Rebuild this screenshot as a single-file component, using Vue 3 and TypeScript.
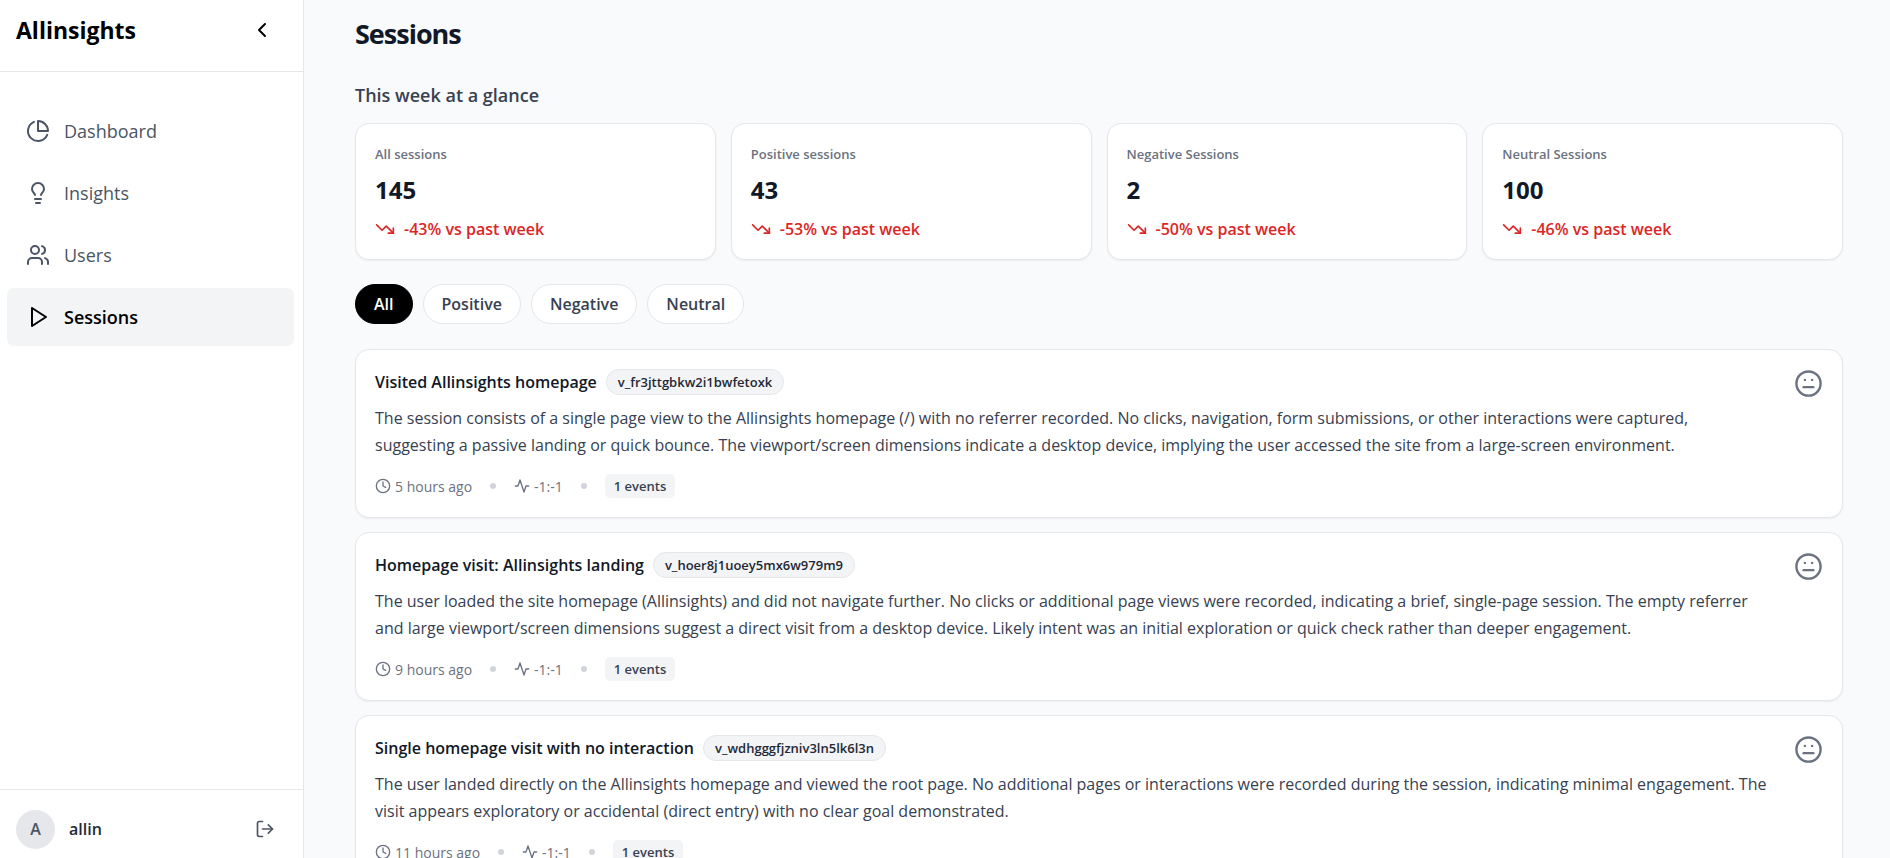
<script setup lang="ts">
import { ref } from 'vue'

interface NavItem { label: string; icon: string[] }
interface Stat { label: string; value: string; change: string }
interface Session { title: string; visitor: string; summary: string; time: string; duration: string; events: string }

const navItems: NavItem[] = [
  { label: 'Dashboard', icon: ['M21.21 15.89A10 10 0 1 1 8 2.83', 'M22 12A10 10 0 0 0 12 2v10z'] },
  {
    label: 'Insights',
    icon: ['M15 14c.2-1 .7-1.7 1.5-2.5 1-.9 1.5-2.2 1.5-3.5A6 6 0 0 0 6 8c0 1 .2 2.2 1.5 3.5.7.7 1.3 1.5 1.5 2.5', 'M9 18h6', 'M10 22h4'],
  },
  {
    label: 'Users',
    icon: ['M16 21v-2a4 4 0 0 0-4-4H6a4 4 0 0 0-4 4v2', 'M13 7a4 4 0 1 1-8 0a4 4 0 1 1 8 0', 'M22 21v-2a4 4 0 0 0-3-3.87', 'M16 3.13a4 4 0 0 1 0 7.75'],
  },
  { label: 'Sessions', icon: ['M6 3l14 9-14 9V3z'] },
]

const stats: Stat[] = [
  { label: 'All sessions', value: '145', change: '-43% vs past week' },
  { label: 'Positive sessions', value: '43', change: '-53% vs past week' },
  { label: 'Negative Sessions', value: '2', change: '-50% vs past week' },
  { label: 'Neutral Sessions', value: '100', change: '-46% vs past week' },
]

const filters: string[] = ['All', 'Positive', 'Negative', 'Neutral']

const sessions: Session[] = [
  {
    title: 'Visited Allinsights homepage',
    visitor: 'v_fr3jttgbkw2i1bwfetoxk',
    summary:
      'The session consists of a single page view to the Allinsights homepage (/) with no referrer recorded. No clicks, navigation, form submissions, or other interactions were captured, suggesting a passive landing or quick bounce. The viewport/screen dimensions indicate a desktop device, implying the user accessed the site from a large-screen environment.',
    time: '5 hours ago',
    duration: '-1:-1',
    events: '1 events',
  },
  {
    title: 'Homepage visit: Allinsights landing',
    visitor: 'v_hoer8j1uoey5mx6w979m9',
    summary:
      'The user loaded the site homepage (Allinsights) and did not navigate further. No clicks or additional page views were recorded, indicating a brief, single-page session. The empty referrer and large viewport/screen dimensions suggest a direct visit from a desktop device. Likely intent was an initial exploration or quick check rather than deeper engagement.',
    time: '9 hours ago',
    duration: '-1:-1',
    events: '1 events',
  },
  {
    title: 'Single homepage visit with no interaction',
    visitor: 'v_wdhgggfjzniv3ln5lk6l3n',
    summary:
      'The user landed directly on the Allinsights homepage and viewed the root page. No additional pages or interactions were recorded during the session, indicating minimal engagement. The visit appears exploratory or accidental (direct entry) with no clear goal demonstrated.',
    time: '11 hours ago',
    duration: '-1:-1',
    events: '1 events',
  },
]

const activeNav = ref('Sessions')
const activeFilter = ref('All')
</script>

<template>
  <div class="app">
    <aside class="sidebar">
      <header class="brand">
        <span class="brand-name">Allinsights</span>
        <button class="icon-button" type="button" aria-label="Collapse sidebar">
          <svg class="icon icon-lg" viewBox="0 0 24 24"><path d="M15 18l-6-6 6-6" /></svg>
        </button>
      </header>

      <nav class="nav">
        <a
          v-for="item in navItems"
          :key="item.label"
          href="#"
          class="nav-link"
          :class="{ active: item.label === activeNav }"
          @click.prevent="activeNav = item.label"
        >
          <svg class="icon icon-lg" viewBox="0 0 24 24"><path v-for="d in item.icon" :key="d" :d="d" /></svg>
          {{ item.label }}
        </a>
      </nav>

      <footer class="account">
        <span class="avatar">A</span>
        <span class="account-name">allin</span>
        <button class="icon-button logout" type="button" aria-label="Log out">
          <svg class="icon icon-md" viewBox="0 0 24 24">
            <path d="M9 21H5a2 2 0 0 1-2-2V5a2 2 0 0 1 2-2h4" />
            <path d="M16 17l5-5-5-5" />
            <path d="M21 12H9" />
          </svg>
        </button>
      </footer>
    </aside>

    <main class="main">
      <h1>Sessions</h1>
      <h2>This week at a glance</h2>

      <section class="stats">
        <article v-for="stat in stats" :key="stat.label" class="card stat">
          <div class="stat-label">{{ stat.label }}</div>
          <div class="stat-value">{{ stat.value }}</div>
          <div class="stat-change">
            <svg class="icon icon-md" viewBox="0 0 24 24">
              <path d="M22 17l-8.500-8.500-5 5L2 7" />
              <path d="M16 17h6v-6" />
            </svg>
            {{ stat.change }}
          </div>
        </article>
      </section>

      <div class="filters">
        <button
          v-for="filter in filters"
          :key="filter"
          type="button"
          class="pill"
          :class="{ active: filter === activeFilter }"
          :aria-pressed="filter === activeFilter"
          @click="activeFilter = filter"
        >
          {{ filter }}
        </button>
      </div>

      <section class="sessions">
        <article v-for="session in sessions" :key="session.visitor" class="card session">
          <div class="session-body">
            <div class="session-head">
              <h3>{{ session.title }}</h3>
              <span class="visitor">{{ session.visitor }}</span>
            </div>
            <p>{{ session.summary }}</p>
            <div class="meta">
              <span class="meta-item">
                <svg class="icon icon-sm" viewBox="0 0 24 24"><circle cx="12" cy="12" r="10" /><path d="M12 6v6l4 2" /></svg>
                {{ session.time }}
              </span>
              <span class="dot"></span>
              <span class="meta-item">
                <svg class="icon icon-sm" viewBox="0 0 24 24"><path d="M22 12h-4l-3 9L9 3l-3 9H2" /></svg>
                {{ session.duration }}
              </span>
              <span class="dot"></span>
              <span class="events">{{ session.events }}</span>
            </div>
          </div>
          <svg class="icon mood" viewBox="0 0 24 24" role="img" aria-label="Neutral">
            <circle cx="12" cy="12" r="10" />
            <path d="M8 15h8" />
            <path d="M9 9h.01" />
            <path d="M15 9h.01" />
          </svg>
        </article>
      </section>
    </main>
  </div>
</template>

<style>
body {
  margin: 0;
}
</style>

<style scoped>
.app {
  display: flex;
  height: 100vh;
  overflow: hidden;
  background: #f9fafb;
  color: #111827;
  font-family: "Segoe UI", "Open Sans", "Noto Sans", sans-serif;
  font-size: 16px;
}

.app *,
.app {
  box-sizing: border-box;
}

.icon {
  flex: none;
  display: block;
  fill: none;
  stroke: currentColor;
  stroke-width: 2;
  stroke-linecap: round;
  stroke-linejoin: round;
}

.icon-lg {
  width: 24px;
  height: 24px;
}

.icon-md {
  width: 20px;
  height: 20px;
}

.icon-sm {
  width: 16px;
  height: 16px;
}

.icon-button {
  display: flex;
  padding: 0;
  border: 0;
  background: none;
  color: inherit;
  cursor: pointer;
}

.sidebar {
  flex: none;
  display: flex;
  flex-direction: column;
  width: 304px;
  border-right: 1px solid #e5e7eb;
  background: #fff;
}

.brand {
  display: flex;
  align-items: center;
  justify-content: space-between;
  height: 72px;
  padding: 0 29px 12px 16px;
  border-bottom: 1px solid #e5e7eb;
  color: #000;
}

.brand-name {
  font-size: 23px;
  font-weight: 700;
}

.nav {
  flex: 1;
  display: flex;
  flex-direction: column;
  gap: 4px;
  padding: 30px 9px 0 7px;
}

.nav-link {
  display: flex;
  align-items: center;
  gap: 14px;
  height: 58px;
  padding: 0 19px;
  border-radius: 7px;
  color: #4b5563;
  font-size: 18px;
  text-decoration: none;
}

.nav-link.active {
  background: #f3f4f6;
  color: #000;
  font-weight: 600;
}

.account {
  display: flex;
  align-items: center;
  height: 69px;
  padding: 10px 28px 0 16px;
  border-top: 1px solid #e5e7eb;
}

.avatar {
  display: flex;
  align-items: center;
  justify-content: center;
  width: 39px;
  height: 39px;
  margin-right: 14px;
  border-radius: 50%;
  background: #e5e7eb;
  color: #4b5563;
  font-weight: 600;
}

.account-name {
  font-weight: 600;
  color: #1f2937;
}

.logout {
  margin-left: auto;
  color: #4b5563;
}

.main {
  flex: 1;
  min-width: 0;
  padding: 14px 47px 0 51px;
}

h1,
h2,
h3,
p {
  margin: 0;
}

h1 {
  font-size: 27px;
  font-weight: 700;
  line-height: 40px;
  letter-spacing: -1px;
}

h2 {
  margin-top: 26px;
  color: #374151;
  font-size: 18px;
  font-weight: 600;
  line-height: 30px;
}

.card {
  border: 1px solid #e5e7eb;
  border-radius: 14px;
  background: #fff;
  box-shadow: 0 1px 2px rgba(0, 0, 0, 0.06);
}

.stats {
  display: grid;
  grid-template-columns: repeat(4, 1fr);
  gap: 15px;
  margin-top: 13px;
}

.stat {
  padding: 20px 19px 18px;
}

.stat-label {
  color: #6b7280;
  font-size: 13px;
  font-weight: 600;
  line-height: 20px;
}

.stat-value {
  margin-top: 9px;
  font-size: 24px;
  font-weight: 700;
  line-height: 34px;
}

.stat-change {
  display: flex;
  align-items: center;
  gap: 9px;
  margin-top: 10px;
  color: #dc2626;
  font-weight: 600;
  line-height: 24px;
}

.filters {
  display: flex;
  gap: 10px;
  margin-top: 24px;
}

.pill {
  height: 40px;
  padding: 0 18px;
  border: 1px solid #e5e7eb;
  border-radius: 20px;
  background: #fff;
  color: #374151;
  font: inherit;
  font-weight: 600;
  cursor: pointer;
}

.pill.active {
  border-color: #000;
  background: #000;
  color: #fff;
}

.sessions {
  display: flex;
  flex-direction: column;
  gap: 14px;
  margin-top: 25px;
}

.session {
  display: flex;
  justify-content: space-between;
  gap: 24px;
  padding: 19px;
}

.session-head {
  display: flex;
  align-items: center;
  gap: 9px;
}

h3 {
  font-size: 16px;
  font-weight: 600;
  line-height: 26px;
}

.visitor {
  padding: 0 11px;
  border: 1px solid #e5e7eb;
  border-radius: 13px;
  background: #f3f4f6;
  color: #1f2937;
  font-size: 13px;
  font-weight: 600;
  line-height: 24px;
}

p {
  margin-top: 10px;
  color: #374151;
  line-height: 27px;
}

.meta {
  display: flex;
  align-items: center;
  gap: 18px;
  margin-top: 15px;
  color: #6b7280;
  font-size: 14px;
}

.meta-item {
  display: flex;
  align-items: center;
  gap: 4px;
}

.dot {
  width: 6px;
  height: 6px;
  border-radius: 50%;
  background: #d1d5db;
}

.events {
  padding: 0 9px;
  border-radius: 5px;
  background: #f3f4f6;
  color: #374151;
  font-size: 13px;
  font-weight: 600;
  line-height: 24px;
}

.mood {
  width: 29px;
  height: 29px;
  color: #6b7280;
}
</style>
